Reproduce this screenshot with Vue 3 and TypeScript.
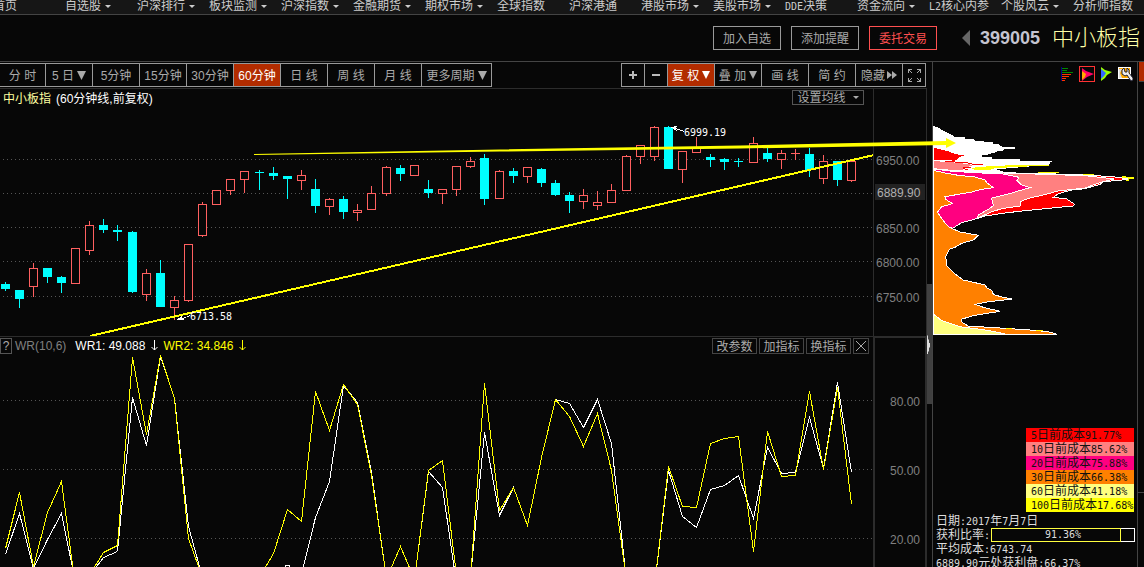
<script setup lang="ts">
interface NavItem { label: string; menu?: boolean }
interface Tool { label: string; active?: boolean; menu?: boolean; kind?: string }
type Direction = 'up' | 'down'
type Candle = [x: number, dir: Direction, high: number, top: number, bottom: number, low: number]

const navItems: NavItem[] = [
  { label: '首页' },
  { label: '自选股', menu: true },
  { label: '沪深排行', menu: true },
  { label: '板块监测', menu: true },
  { label: '沪深指数', menu: true },
  { label: '金融期货', menu: true },
  { label: '期权市场', menu: true },
  { label: '全球指数' },
  { label: '沪深港通' },
  { label: '港股市场', menu: true },
  { label: '美股市场', menu: true },
  { label: 'DDE决策' },
  { label: '资金流向', menu: true },
  { label: 'L2核心内参' },
  { label: '个股风云', menu: true },
  { label: '分析师指数' },
]

const periods: Tool[] = [
  { label: '分 时', kind: 'first' },
  { label: '5 日', menu: true },
  { label: '5分钟' },
  { label: '15分钟' },
  { label: '30分钟' },
  { label: '60分钟', active: true },
  { label: '日 线' },
  { label: '周 线' },
  { label: '月 线' },
  { label: '更多周期', menu: true, kind: 'wide' },
]

const tools: Tool[] = [
  { label: '放大', kind: 'plus' },
  { label: '缩小', kind: 'minus' },
  { label: '复 权', menu: true, active: true },
  { label: '叠 加', menu: true },
  { label: '画 线' },
  { label: '简 约' },
  { label: '隐藏', kind: 'hide' },
  { label: '全屏', kind: 'full' },
]

const candles: Candle[] = [
  [5, 'down', 282, 284, 289, 291], [19, 'down', 290, 290, 299, 308], [33, 'up', 263, 268, 287, 297],
  [47, 'down', 268, 268, 277, 283], [61, 'down', 276, 277, 283, 293], [75, 'up', 248, 248, 284, 284],
  [89, 'up', 221, 225, 251, 255], [103, 'down', 219, 225, 230, 233], [117, 'down', 225, 230, 232, 241],
  [132, 'down', 231, 232, 292, 293], [146, 'up', 269, 273, 295, 301], [160, 'down', 260, 273, 307, 307],
  [174, 'up', 296, 300, 308, 320], [188, 'up', 244, 244, 301, 302], [202, 'up', 202, 204, 236, 237],
  [216, 'up', 190, 190, 205, 205], [230, 'up', 179, 179, 191, 195], [244, 'up', 171, 171, 180, 193],
  [259, 'down', 170, 172, 173, 190], [273, 'down', 167, 173, 176, 180], [287, 'down', 176, 176, 179, 199],
  [301, 'up', 170, 175, 181, 190], [315, 'down', 179, 189, 206, 213], [329, 'up', 198, 199, 207, 215],
  [343, 'down', 196, 199, 212, 219], [357, 'up', 204, 210, 213, 221], [371, 'up', 186, 193, 210, 210],
  [386, 'up', 166, 167, 194, 196], [400, 'down', 165, 168, 174, 181], [414, 'up', 165, 165, 176, 176],
  [428, 'down', 180, 189, 193, 198], [442, 'up', 189, 189, 194, 204], [456, 'up', 166, 166, 190, 196],
  [470, 'up', 157, 161, 167, 168], [484, 'down', 154, 158, 199, 205], [499, 'up', 170, 171, 199, 199],
  [513, 'down', 168, 171, 176, 183], [527, 'up', 167, 167, 177, 183], [541, 'down', 168, 169, 183, 187],
  [555, 'down', 180, 183, 195, 196], [569, 'down', 192, 195, 201, 213], [583, 'up', 189, 195, 202, 209],
  [597, 'up', 191, 202, 206, 210], [611, 'up', 184, 190, 203, 203], [626, 'up', 155, 156, 191, 191],
  [640, 'up', 145, 145, 157, 164], [654, 'up', 126, 127, 157, 161], [668, 'down', 126, 127, 169, 169],
  [682, 'up', 151, 151, 170, 183], [696, 'up', 137, 147, 153, 153], [710, 'down', 154, 157, 160, 167],
  [724, 'down', 158, 159, 162, 170], [738, 'down', 158, 161, 162, 167], [753, 'up', 137, 143, 163, 163],
  [767, 'down', 147, 153, 159, 162], [781, 'up', 150, 153, 160, 169], [795, 'up', 149, 153, 154, 160],
  [809, 'down', 148, 154, 170, 177], [823, 'up', 155, 161, 179, 184], [837, 'down', 161, 161, 180, 186],
  [851, 'up', 160, 161, 181, 182],
]

const priceGrid = [159, 193, 227, 261, 296]
const priceLabels = [
  { text: '6950.00', y: 165 },
  { text: '6850.00', y: 233 },
  { text: '6800.00', y: 267 },
  { text: '6750.00', y: 302 },
]
const wrLabels = [
  { text: '80.00', y: 400 },
  { text: '50.00', y: 469 },
  { text: '20.00', y: 538 },
]

const wr1 = '5,554 19,513 33,568 47,539 61,513 75,582 90,574 103,557 117,551 132,397 146,445 160,356 174,398 188,526 202,577 230,590 287,590 301,574 315,517 329,481 343,385 357,402 371,472 386,578 400,546 414,579 428,471 442,487 456,583 470,577 484,432 499,515 513,487 527,525 541,457 555,399 569,403 583,427 597,399 611,443 626,580 654,585 668,470 682,516 696,527 710,489 724,485 738,475 753,518 767,447 781,473 795,472 809,417 823,468 837,382 851,472'
const wr2 = '5,548 19,492 33,566 47,512 61,481 75,587 90,573 103,552 117,545 132,357 146,434 160,355 174,398 188,538 202,577 230,590 259,577 273,553 287,509 301,521 315,391 329,430 343,384 357,404 371,475 386,578 400,546 414,579 428,470 442,460 456,575 470,579 484,383 499,510 513,487 527,525 541,457 555,399 569,416 583,446 597,413 611,470 626,580 654,585 668,466 682,506 696,507 710,443 724,438 738,436 753,551 767,431 781,476 795,475 809,391 823,469 837,387 851,504'

const costs = [
  { key: 'd5', text: '5日前成本91.77%' },
  { key: 'd10', text: '10日前成本85.62%' },
  { key: 'd20', text: '20日前成本75.88%' },
  { key: 'd30', text: '30日前成本66.38%' },
  { key: 'd60', text: '60日前成本41.18%' },
  { key: 'd100', text: '100日前成本17.68%' },
]

const profitRatio = 91.36

/** Splits a label into Latin and Chinese runs, so digits can use the fixed-width face. */
function runs(text: string): { text: string; latin: boolean }[] {
  return (text.match(/[\x20-\x7e]+|[^\x20-\x7e]+/g) ?? []).map((part) => ({
    text: part,
    latin: /^[\x20-\x7e]/.test(part),
  }))
}
</script>

<template>
  <div class="app">
    <nav class="nav">
      <a v-for="item in navItems" :key="item.label" href="#" class="nav-item">
        <span><span v-for="(r, i) in runs(item.label)" :key="i" :class="{ mono: r.latin }">{{ r.text }}</span></span>
        <span v-if="item.menu" class="caret"></span>
      </a>
    </nav>

    <header class="header">
      <button class="action">加入自选</button>
      <button class="action">添加提醒</button>
      <button class="action trade">委托交易</button>
      <button class="prev" aria-label="上一个">
        <svg width="8" height="16" viewBox="0 0 8 16"><path d="M8 0v16L0 8z" fill="#666" /></svg>
      </button>
      <span class="code">399005</span>
      <h1 class="name">中小板指</h1>
    </header>

    <main class="main">
      <section class="left">
        <div class="toolbar">
          <div class="group">
            <button v-for="p in periods" :key="p.label" class="tool" :class="[p.kind, { active: p.active }]">
              <span class="tool-text">{{ p.label }}</span>
              <svg v-if="p.menu" width="9" height="9" viewBox="0 0 9 9"><path d="M0 0h9L4.500 9z" fill="currentColor" /></svg>
            </button>
          </div>
          <div class="group">
            <button v-for="t in tools" :key="t.label" class="tool" :class="[t.kind, { active: t.active }]" :aria-label="t.label">
              <svg v-if="t.kind === 'plus'" width="8" height="8" viewBox="0 0 8 8"><path d="M3 0h2v3h3v2H5v3H3V5H0V3h3z" fill="#bbb" /></svg>
              <svg v-else-if="t.kind === 'minus'" width="8" height="8" viewBox="0 0 8 8"><path d="M0 3h8v2H0z" fill="#bbb" /></svg>
              <svg v-else-if="t.kind === 'full'" width="13" height="13" viewBox="0 0 13 13" fill="none" stroke="#aaa" shape-rendering="crispEdges">
                <path d="M.5 4V.5H4M1 1l3 3M9 .5h3.500V4M12 1L9 4M.5 9v3.500H4M1 12l3-3M9 12.500h3.500V9M12 12L9 9" />
              </svg>
              <span v-else class="tool-text">{{ t.label }}</span>
              <svg v-if="t.kind === 'hide'" width="10" height="8" viewBox="0 0 10 8"><path d="M0 0l5 4-5 4zM5 0l5 4-5 4z" fill="#aaa" /></svg>
              <svg v-if="t.menu" width="8" height="8" viewBox="0 0 9 9"><path d="M0 0h9L4.500 9z" fill="currentColor" /></svg>
            </button>
          </div>
        </div>

        <section class="pane price">
          <div class="plot">
            <div class="pane-head">
              <span class="title-name">中小板指</span>
              <span class="title-period">(60分钟线,前复权)</span>
              <button class="ma">设置均线<span class="caret"></span></button>
            </div>
            <svg class="price-svg" shape-rendering="crispEdges">
              <g transform="translate(0 -106)">
                <line v-for="y in priceGrid" :key="y" x1="3" x2="100%" :y1="y + 0.5" :y2="y + 0.5" class="grid" />
                <g v-for="[x, dir, high, top, bottom, low] in candles" :key="x" :class="dir">
                  <rect v-if="dir === 'down'" :x="x - 4" :y="top" width="9" :height="bottom - top" class="solid" />
                  <rect v-else-if="bottom - top > 1" :x="x - 3.5" :y="top + 0.5" width="8" :height="bottom - top - 1" class="hollow" />
                  <rect v-else :x="x - 4" :y="top" width="9" height="1" class="solid" />
                  <rect :x="x" :y="high" width="1" :height="top - high" class="solid" />
                  <rect :x="x" :y="bottom" width="1" :height="low - bottom" class="solid" />
                </g>
                <line x1="90" y1="336" x2="874" y2="155" stroke="#ff0" stroke-width="2" />
                <path d="M176 320l6-4v2l4-1 4-2v1l-7 3 1 1z" fill="#fff" />
                <path d="M670 127l7-1-1 2 8 3v1l-8-3 1 2z" fill="#fff" />
                <text x="684" y="136" class="mark">6999.19</text>
                <text x="190" y="320" class="mark">6713.58</text>
              </g>
            </svg>
          </div>
          <svg class="axis">
            <g transform="translate(-874 -89)">
              <rect x="875" y="184" width="50" height="16" fill="#222" />
              <text x="877" y="197" class="axis-text current">6889.90</text>
              <text v-for="l in priceLabels" :key="l.text" x="876" :y="l.y" class="axis-text">{{ l.text }}</text>
            </g>
          </svg>
        </section>

        <section class="pane wr">
          <div class="plot">
            <div class="pane-head">
              <button class="help">?</button>
              <span class="wr-name">WR(10,6)</span>
              <span class="wr-one">WR1: 49.088
                <svg width="7" height="11" viewBox="0 0 7 11" fill="none" stroke="currentColor"><path d="M3.500 0v10M.5 7l3 3 3-3" /></svg>
              </span>
              <span class="wr-two">WR2: 34.846
                <svg width="7" height="11" viewBox="0 0 7 11" fill="none" stroke="currentColor"><path d="M3.500 0v10M.5 7l3 3 3-3" /></svg>
              </span>
              <div class="wr-actions">
                <button>改参数</button>
                <button>加指标</button>
                <button>换指标</button>
                <button class="close" aria-label="关闭">
                  <svg width="10" height="10" viewBox="0 0 10 10"><path d="M0 0l10 10M10 0L0 10" stroke="#aaa" /></svg>
                </button>
              </div>
            </div>
            <svg class="wr-svg" shape-rendering="crispEdges">
              <g transform="translate(0 -354)" fill="none">
                <line v-for="l in wrLabels" :key="l.y" x1="3" x2="100%" :y1="l.y + 0.5" :y2="l.y + 0.5" class="grid" />
                <g transform="translate(0.5 0.5)">
                  <polyline :points="wr1" stroke="#fff" />
                  <polyline :points="wr2" stroke="#ff0" />
                  <circle cx="287" cy="568" r="3" stroke="#fff" />
                </g>
              </g>
            </svg>
          </div>
          <svg class="axis">
            <g transform="translate(-875 -338)">
              <text v-for="l in wrLabels" :key="l.y" x="890" :y="l.y + 6" class="axis-text">{{ l.text }}</text>
            </g>
          </svg>
        </section>
      </section>

      <div class="scroller">
        <div class="thumb">
          <svg width="4" height="19" viewBox="0 0 4 19"><path d="M0 0l1 1v3l1 1v3h1v4l-1 1v3l-1 1v2H0z" fill="#ddd" /></svg>
        </div>
      </div>

      <aside class="chips">
        <div class="chip-icons">
          <button aria-label="筹码分布">
            <svg width="14" height="15" viewBox="0 0 14 15" shape-rendering="crispEdges">
              <path d="M1 1h6v1H1zM1 3h5v1H1zM1 5h11v1H1z" fill="#080" />
              <path d="M1 7h9v1H1zM1 9h7v1H1zM1 11h4v1H1zM1 13h3v1H1z" fill="#f30" />
              <path d="M0 0h1v14H0z" fill="#008" />
            </svg>
          </button>
          <button class="picked" aria-label="火焰山">
            <svg width="13" height="13" viewBox="0 0 13 13">
              <path d="M1 0l4 3 8 3-7 3-5 4z" fill="#f06" /><path d="M1 3l4 3-1 3-3 3z" fill="#fa0" />
            </svg>
          </button>
          <button aria-label="活跃度">
            <svg width="13" height="14" viewBox="0 0 13 14">
              <path d="M1 0l4 3 7 2-5 3-2 3-4 3z" fill="#9f0" /><path d="M1 2l5 4-2 3-3 3z" fill="#36f" />
            </svg>
          </button>
          <button aria-label="设置">
            <svg width="15" height="15" viewBox="0 0 15 15">
              <path d="M0 0h13v12H0z" fill="#fff" />
              <path d="M1 1h11v10H1z" fill="#fa0" />
              <path d="M1 2h3l-2 4 2 5H1z" fill="#ddd" />
              <path d="M6 1L4 3v4l3 2 2-1 4 6 2-1v-2l-4-5V3L9 1v4H7z" fill="#eee" stroke="#223" />
            </svg>
          </button>
        </div>

        <svg class="profile" viewBox="24 0 612 690" shape-rendering="crispEdges" stroke-width="3">
          <path fill="#fff" d="M24 48L38 51 50 60 72 70 90 81H120V87H147L150 93 205 96V101L220 103 232 111H270V116H238L234 122 218 124 205 130 190 131 188 136H170L172 140H200V147H285V153H384L375 158 372 166 318 169 215 178 240 187 340 189 456 194 540 198 600 203 24 192z" />
          <path fill="#ff0" d="M372 164L320 165 215 167 150 172 135 178 198 181V177L215 174 318 169 372 167zM340 185H402V189H340zM456 191H506V195H456zM590 198H603V201H627V207H613V212H604L590 206z" />
          <path fill="red" d="M27 113L70 124 90 132 117 136 105 141 90 152 27 149z" />
          <path fill="#ff8080" stroke="#fff" d="M26 152L80 155 130 161 150 165 130 172 110 183 80 181 26 176z" />
          <path fill="none" stroke="red" d="M60 153L90 156 125 158 140 162 175 165M115 173H138M115 176L130 179" />
          <path fill="red" stroke="#fff" d="M130 187L340 190 500 196 570 201 609 207 590 210 535 215 525 223 480 236 440 240 400 251 385 262 425 267 449 283 445 288 380 294 300 302 240 309 180 318 155 326z" />
          <path fill="#ff8080" stroke="#fff" d="M130 186L270 190 480 197 568 207 530 216 480 234 400 243 350 256 310 265 285 275V288L235 295 200 305 155 326z" />
          <path fill="#ff0080" stroke="#fff" d="M24 177L75 183 130 187 235 192 282 202 276 211 290 225 316 233 290 240 250 252 200 264 203 280 206 286 190 298 160 315 155 326 110 338 83 355 72 352 24 320z" />
          <path fill="#ff8000" stroke="#fff" d="M25 181L60 189 100 196 150 201 180 210 185 218 205 233 170 238 140 246 60 260 62 268 83 281 50 290 37 307 55 332 70 350 85 357 105 366 160 376 145 390 110 400 90 412 73 418 62 440 66 468 90 492 115 510 150 518 180 525 185 533 202 543 205 554 240 563 260 567 230 571 190 575 150 583 175 592 226 604 180 611 145 617 108 628 112 638 130 648 210 653 330 661 380 667 395 673H25z" />
          <path fill="#ffff80" stroke="#fff" d="M25 612L50 632 80 642 110 651 160 657 210 665 243 673H25z" />
          <path fill="none" stroke="#ff0" d="M243 656H260M332 661H353" />
          <path fill="none" stroke="#fff" d="M25.500 48V674M24 673.500H396" />
        </svg>

        <ul class="costs">
          <li v-for="c in costs" :key="c.key" :class="c.key">
            <span v-for="(r, i) in runs(c.text)" :key="i" :class="{ mono: r.latin }">{{ r.text }}</span>
          </li>
        </ul>

        <div class="info">
          <p><span v-for="(r, i) in runs('日期:2017年7月7日')" :key="i" :class="{ mono: r.latin }">{{ r.text }}</span></p>
          <p class="ratio">
            <span>获利比率<span class="mono">:</span></span>
            <span class="bar">
              <span class="fill" :style="{ width: profitRatio + '%' }"></span>
              <span class="bar-text mono">{{ profitRatio }}%</span>
            </span>
          </p>
          <p><span v-for="(r, i) in runs('平均成本:6743.74')" :key="i" :class="{ mono: r.latin }">{{ r.text }}</span></p>
          <p><span v-for="(r, i) in runs('6889.90元处获利盘:66.37%')" :key="i" :class="{ mono: r.latin }">{{ r.text }}</span></p>
        </div>
      </aside>

      <div class="edge"><div class="edge-tab"></div><div class="edge-body"></div></div>

      <svg class="trend" width="960" height="110">
        <g transform="translate(0 -62)">
          <path d="M254 154L500 149.500 740 145.500 946 141V138L956 143 946 148V145L740 148.500 500 151.500 254 155z" fill="#ff0" />
        </g>
      </svg>
    </main>
  </div>
</template>

<style>
body {
  margin: 0;
  background: #070707;
}
</style>

<style scoped>
.app {
  display: flex;
  flex-direction: column;
  height: 100vh;
  overflow: hidden;
  background: #070707;
  color: #aaa;
  font: 12px/14px "Liberation Sans", "Noto Sans CJK SC", sans-serif;
}
button {
  display: flex;
  align-items: center;
  justify-content: center;
  box-sizing: border-box;
  margin: 0;
  padding: 0;
  border: 0;
  background: none;
  color: inherit;
  font: inherit;
  white-space: nowrap;
}
svg {
  display: block;
  flex: none;
}
.mono {
  font-family: "DejaVu Sans Mono", monospace;
  font-size: 10px;
}
.caret {
  border: 3px solid transparent;
  border-top-color: currentColor;
  border-bottom: 0;
}

.nav {
  display: flex;
  flex: none;
  align-items: flex-end;
  height: 14px;
  padding-left: 65px;
  margin-left: -72px;
  overflow: hidden;
  background: #161616;
  border-bottom: 1px solid #444;
}
.nav-item {
  display: flex;
  flex: 0 0 72px;
  align-items: center;
  gap: 4px;
  height: 16px;
  color: #ccc;
  text-decoration: none;
  white-space: nowrap;
}

.header {
  display: flex;
  flex: none;
  align-items: center;
  justify-content: flex-end;
  height: 46px;
  padding-right: 4px;
  border-bottom: 1px solid #444;
}
.action {
  width: 68px;
  height: 24px;
  margin-right: 10px;
  padding-top: 2px;
  border: 1px solid #999;
}
.trade {
  border-color: #ff5050;
  color: #ff5050;
}
.prev {
  margin: 0 10px 0 15px;
}
.code {
  color: #c4c4d0;
  font-size: 18px;
  font-weight: bold;
}
.name {
  margin: 0 0 0 12px;
  color: #ffffa8;
  font-size: 22px;
  font-weight: 300;
  line-height: 24px;
}

.main {
  position: relative;
  display: flex;
  flex: 1;
  min-height: 0;
}
.left {
  display: flex;
  flex: 1;
  flex-direction: column;
  min-width: 0;
}
.toolbar {
  display: flex;
  flex: none;
  justify-content: space-between;
  padding: 1px 1px 1px 0;
}
.group {
  display: flex;
  height: 24px;
}
.tool {
  gap: 3px;
  width: 47px;
  border: 1px solid #999;
  border-left: 0;
}
.tool-text {
  padding-top: 2px;
}
.tool.first {
  width: 46px;
}
.tool.wide {
  width: 70px;
}
.tool.plus {
  width: 24px;
  border-left: 1px solid #999;
}
.tool.minus,
.tool.full {
  width: 23px;
}
.tool.hide {
  gap: 2px;
}
.tool.active {
  background: #b22c00;
  color: #fff;
}

.pane {
  display: flex;
  border-top: 1px solid #2c2c2c;
}
.price {
  flex: 0 0 247px;
}
.wr {
  flex: 1;
  min-height: 0;
}
.plot {
  display: flex;
  flex: 1;
  flex-direction: column;
  min-width: 0;
}
.axis {
  box-sizing: border-box;
  width: 54px;
  height: 100%;
  border: 1px solid #2c2c2c;
  border-width: 0 1px;
}
.wr .axis {
  border-width: 1px 2px 0;
}
.pane-head {
  display: flex;
  flex: none;
  align-items: center;
  height: 17px;
}
.title-name {
  margin: 0 5px 0 3px;
  padding-top: 2px;
  color: #ffffa0;
}
.title-period {
  padding-top: 2px;
  color: #fff;
}
.ma {
  gap: 7px;
  width: 72px;
  height: 15px;
  margin: 0 9px 0 auto;
  border: 1px solid #555;
}
.price-svg {
  width: 100%;
  height: 230px;
}
.wr-svg {
  flex: 1;
  width: 100%;
  min-height: 0;
}
.grid {
  stroke: #555;
  stroke-dasharray: 1 3;
}
.up .hollow {
  fill: #070707;
  stroke: #ff6060;
}
.up .solid {
  fill: #ff6060;
}
.down .solid {
  fill: #0ff;
}
.mark {
  fill: #fff;
  font: 10px "DejaVu Sans Mono", monospace;
}
.axis-text {
  fill: #808080;
}
.axis-text.current {
  fill: #b0b0b0;
}
.help {
  width: 12px;
  height: 16px;
  border: 1px solid #555;
}
.wr-name {
  margin: 0 9px 0 3px;
  color: #808080;
}
.wr-one,
.wr-two {
  display: flex;
  align-items: center;
  gap: 6px;
  margin-right: 5px;
}
.wr-one {
  color: #fff;
}
.wr-two {
  color: #ff0;
}
.wr-actions {
  display: flex;
  gap: 2px;
  margin: 0 4px 0 auto;
}
.wr-actions button {
  width: 45px;
  height: 16px;
  padding-top: 2px;
  border: 1px solid #444;
}
.wr-actions .close {
  width: 16px;
  padding-top: 0;
}

.scroller {
  flex: 0 0 5px;
}
.thumb {
  height: 120px;
  margin-top: 222px;
  padding-top: 51px;
  box-sizing: border-box;
  background: #404040;
}

.chips {
  display: flex;
  flex: 0 0 204px;
  flex-direction: column;
  border-left: 1px solid #444;
}
.chip-icons {
  display: flex;
  flex: none;
  align-items: flex-start;
  justify-content: flex-end;
  gap: 4px;
  height: 44px;
  padding: 4px 4px 0 0;
}
.chip-icons button {
  width: 15px;
  height: 16px;
}
.chip-icons .picked {
  width: 16px;
  border: 1px solid #f33;
}
.profile {
  width: 204px;
  height: 230px;
}
.costs {
  flex: none;
  width: 108px;
  margin: 88px 3px 2px auto;
  padding: 0;
  list-style: none;
  color: #111;
}
.costs li {
  box-sizing: border-box;
  height: 14px;
  padding-left: 5px;
  white-space: nowrap;
}
.d5 { background: #f00; }
.d10 { background: #ff8080; }
.d20 { background: #ff0080; }
.d30 { background: #ff8000; }
.d60 { background: #ffff80; }
.d100 { background: #ff0; }
.info {
  padding: 0 2px 0 3px;
  color: #ddd;
}
.info p {
  height: 14px;
  margin: 0;
  white-space: nowrap;
}
.info .ratio {
  display: flex;
  align-items: center;
  justify-content: space-between;
}
.bar {
  position: relative;
  box-sizing: border-box;
  width: 144px;
  height: 14px;
  border: 1px solid #fff;
}
.fill {
  position: absolute;
  top: -1px;
  left: -1px;
  box-sizing: border-box;
  height: 14px;
  border: 1px solid #ffff40;
}
.bar-text {
  display: block;
  line-height: 12px;
  text-align: center;
}

.edge {
  flex: 0 0 6px;
  border-left: 1px solid #444;
}
.edge-tab {
  height: 19px;
  margin-left: 1px;
  background: #b22c00;
  border-bottom: 1px solid #444;
}
.edge-body {
  height: 410px;
  border-bottom: 1px solid #444;
}
.trend {
  position: absolute;
  top: 0;
  left: 0;
  pointer-events: none;
}
</style>
